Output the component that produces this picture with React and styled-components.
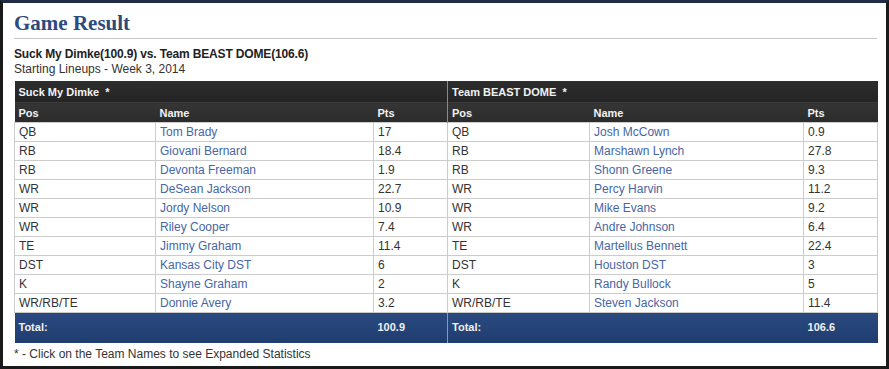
import React from "react";
import styled, { createGlobalStyle } from "styled-components";

const GlobalStyle = createGlobalStyle`
  html, body {
    margin: 0;
    padding: 0;
    background: #1b1b1b;
  }
`;

const Frame = styled.div`
  width: 889px;
  height: 369px;
  box-sizing: border-box;
  border-top: 3px solid #1f2c44;
  border-left: 3px solid #1a1a1a;
  border-right: 3px solid #1a1a1a;
  border-bottom: 3px solid #1a1a1a;
  background: #ffffff;
  padding: 0 9px 0 11px;
  font-family: "Liberation Sans", Arial, sans-serif;
  color: #333333;
  overflow: hidden;
`;

const Title = styled.h2`
  margin: 0;
  padding-top: 10px;
  padding-bottom: 5px;
  font-family: "Liberation Serif", "Times New Roman", serif;
  font-size: 21px;
  line-height: 20px;
  font-weight: bold;
  color: #2c4a7c;
  border-bottom: 1px solid #c6c6c6;
`;

const Matchup = styled.div`
  margin-top: 8px;
  font-size: 12px;
  line-height: 15px;
  font-weight: bold;
  letter-spacing: -0.15px;
  color: #222;
`;

const SubLine = styled.div`
  font-size: 12px;
  line-height: 15px;
  color: #333;
`;

const Table = styled.table`
  margin-top: 4px;
  width: 863px;
  border-collapse: collapse;
  table-layout: fixed;
  font-size: 12px;
`;

const TeamCell = styled.th`
  height: 21px;
  padding: 0 4px;
  text-align: left;
  font-size: 11px;
  font-weight: bold;
  color: #f2f2f2;
  background: linear-gradient(#2e2e2e, #242424);
  border-left: ${(p) => (p.$split ? "1px solid #8a8a8a" : "none")};
`;

const HeadCell = styled.th`
  height: 19px;
  padding: 0 4px;
  text-align: left;
  font-size: 11px;
  font-weight: bold;
  color: #f2f2f2;
  background: linear-gradient(#353535, #2b2b2b);
  border-top: 1px solid #3c3c3c;
  border-left: ${(p) => (p.$split ? "1px solid #8a8a8a" : "none")};
`;

const Cell = styled.td`
  height: 18px;
  padding: 0 4px;
  border: 1px solid #cccccc;
  color: #333;
  white-space: nowrap;
  overflow: hidden;
`;

const PlayerLink = styled.a`
  color: #4666a6;
  text-decoration: none;
`;

const TotalCell = styled.td`
  height: 28px;
  padding: 0 4px 2px;
  font-size: 11px;
  font-weight: bold;
  color: #f0f0f0;
  background: linear-gradient(#2a4a80, #1f3c6e);
  border-left: ${(p) => (p.$split ? "1px solid #8a98b0" : "none")};
`;

const Note = styled.div`
  margin-top: 4px;
  font-size: 12px;
  line-height: 14px;
  color: #333;
`;

const home = [
  ["QB", "Tom Brady", "17"],
  ["RB", "Giovani Bernard", "18.4"],
  ["RB", "Devonta Freeman", "1.9"],
  ["WR", "DeSean Jackson", "22.7"],
  ["WR", "Jordy Nelson", "10.9"],
  ["WR", "Riley Cooper", "7.4"],
  ["TE", "Jimmy Graham", "11.4"],
  ["DST", "Kansas City DST", "6"],
  ["K", "Shayne Graham", "2"],
  ["WR/RB/TE", "Donnie Avery", "3.2"],
];

const away = [
  ["QB", "Josh McCown", "0.9"],
  ["RB", "Marshawn Lynch", "27.8"],
  ["RB", "Shonn Greene", "9.3"],
  ["WR", "Percy Harvin", "11.2"],
  ["WR", "Mike Evans", "9.2"],
  ["WR", "Andre Johnson", "6.4"],
  ["TE", "Martellus Bennett", "22.4"],
  ["DST", "Houston DST", "3"],
  ["K", "Randy Bullock", "5"],
  ["WR/RB/TE", "Steven Jackson", "11.4"],
];

export default function App() {
  return (
    <>
      <GlobalStyle />
      <Frame>
        <Title>Game Result</Title>
        <Matchup>Suck My Dimke(100.9) vs. Team BEAST DOME(106.6)</Matchup>
        <SubLine>Starting Lineups - Week 3, 2014</SubLine>
        <Table>
          <colgroup>
            <col style={{ width: 141 }} />
            <col style={{ width: 218 }} />
            <col style={{ width: 74 }} />
            <col style={{ width: 142 }} />
            <col style={{ width: 214 }} />
            <col style={{ width: 74 }} />
          </colgroup>
          <thead>
            <tr>
              <TeamCell colSpan={3}>Suck My Dimke &nbsp;*</TeamCell>
              <TeamCell colSpan={3} $split>
                Team BEAST DOME &nbsp;*
              </TeamCell>
            </tr>
            <tr>
              <HeadCell>Pos</HeadCell>
              <HeadCell>Name</HeadCell>
              <HeadCell>Pts</HeadCell>
              <HeadCell $split>Pos</HeadCell>
              <HeadCell>Name</HeadCell>
              <HeadCell>Pts</HeadCell>
            </tr>
          </thead>
          <tbody>
            {home.map((h, i) => {
              const a = away[i];
              return (
                <tr key={i}>
                  <Cell>{h[0]}</Cell>
                  <Cell>
                    <PlayerLink href="#">{h[1]}</PlayerLink>
                  </Cell>
                  <Cell>{h[2]}</Cell>
                  <Cell>{a[0]}</Cell>
                  <Cell>
                    <PlayerLink href="#">{a[1]}</PlayerLink>
                  </Cell>
                  <Cell>{a[2]}</Cell>
                </tr>
              );
            })}
            <tr>
              <TotalCell colSpan={2}>Total:</TotalCell>
              <TotalCell>100.9</TotalCell>
              <TotalCell colSpan={2} $split>
                Total:
              </TotalCell>
              <TotalCell>106.6</TotalCell>
            </tr>
          </tbody>
        </Table>
        <Note>* - Click on the Team Names to see Expanded Statistics</Note>
      </Frame>
    </>
  );
}
